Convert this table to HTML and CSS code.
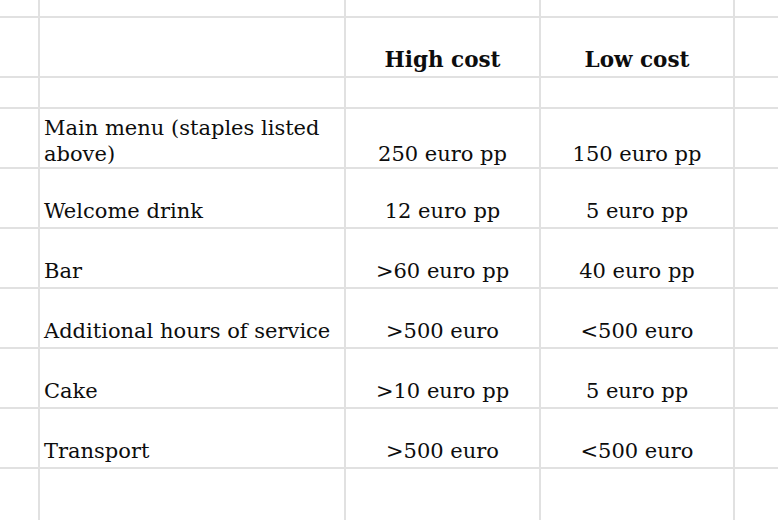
FILE: index.html
```html
<!DOCTYPE html>
<html>
<head>
<meta charset="utf-8">
<link rel="stylesheet" href="styles.css">
</head>
<body>
<div class="sheet">
  <div class="c"></div><div class="c"></div><div class="c"></div><div class="c"></div><div class="c"></div>

  <div class="c"></div><div class="c"></div><div class="c hd">High cost</div><div class="c hd">Low cost</div><div class="c"></div>

  <div class="c"></div><div class="c"></div><div class="c"></div><div class="c"></div><div class="c"></div>

  <div class="c"></div><div class="c lb wrap">Main menu (staples listed above)</div><div class="c val tight">250 euro pp</div><div class="c val tight">150 euro pp</div><div class="c"></div>

  <div class="c"></div><div class="c lb">Welcome drink</div><div class="c val">12 euro pp</div><div class="c val">5 euro pp</div><div class="c"></div>

  <div class="c"></div><div class="c lb">Bar</div><div class="c val">&gt;60 euro pp</div><div class="c val">40 euro pp</div><div class="c"></div>

  <div class="c"></div><div class="c lb">Additional hours of service</div><div class="c val">&gt;500 euro</div><div class="c val">&lt;500 euro</div><div class="c"></div>

  <div class="c"></div><div class="c lb">Cake</div><div class="c val">&gt;10 euro pp</div><div class="c val">5 euro pp</div><div class="c"></div>

  <div class="c"></div><div class="c lb">Transport</div><div class="c val">&gt;500 euro</div><div class="c val">&lt;500 euro</div><div class="c"></div>

  <div class="c"></div><div class="c"></div><div class="c"></div><div class="c"></div><div class="c"></div>
</div>
</body>
</html>
```
FILE: styles.css
```css
html, body {
  margin: 0;
  padding: 0;
  background: #ffffff;
}
body {
  width: 778px;
  height: 520px;
  overflow: hidden;
  font-family: "DejaVu Serif", "Liberation Serif", serif;
  font-size: 21px;
  color: #0d0d0d;
}
.sheet {
  display: grid;
  grid-template-columns: 38px 304px 193px 192px 1fr;
  grid-template-rows: 16px 58px 29px 58px 58px 58px 58px 58px 58px 1fr;
  gap: 2px;
  background: #e1e1e1;
  height: 520px;
}
.c {
  background: #ffffff;
  display: flex;
  align-items: flex-end;
  line-height: 26px;
  padding: 0 4px 3px;
  min-width: 0;
}
.hd {
  justify-content: center;
  font-weight: bold;
  font-size: 21.5px;
}
.val {
  justify-content: center;
}
.lb {
  justify-content: flex-start;
}
.tight {
  padding-bottom: 0;
}
.wrap {
  padding-bottom: 0;
}
```
